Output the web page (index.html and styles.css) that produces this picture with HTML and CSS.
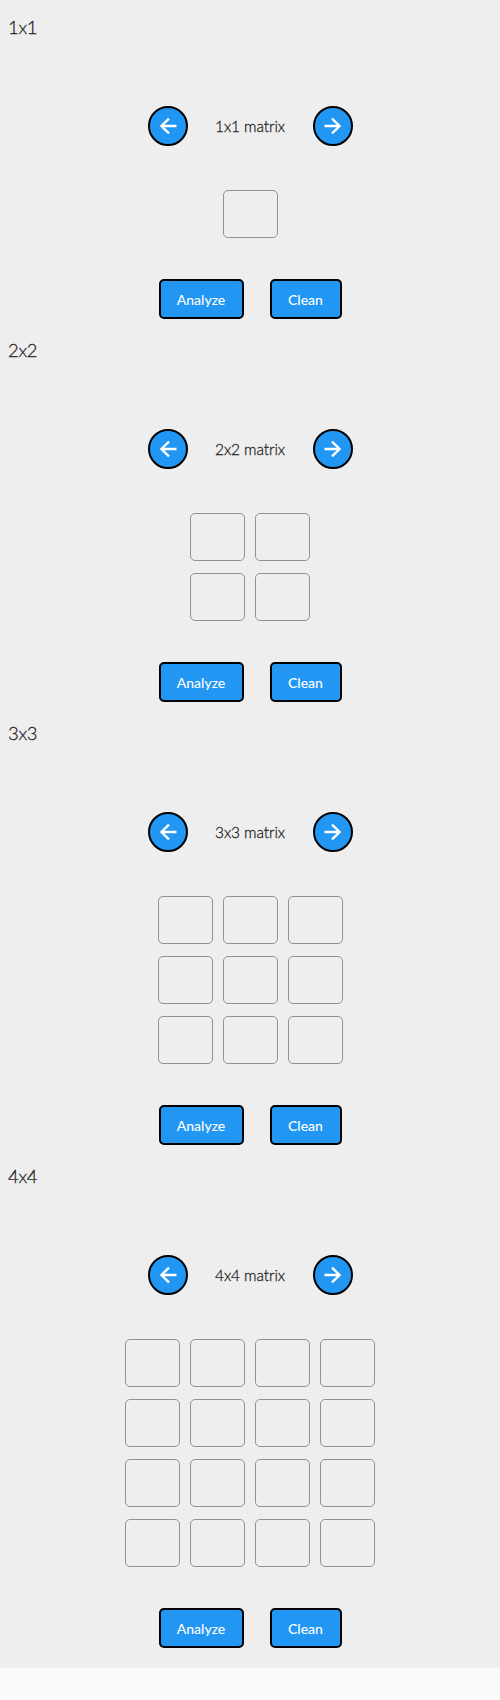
FILE: index.html
```
<!DOCTYPE html>
<html lang="en">
<head>
<meta charset="utf-8">
<title>Matrix</title>
<link rel="stylesheet" href="styles.css">
</head>
<body>
<main class="page" id="page"></main>
<script src="app.js"></script>
</body>
</html>
```
FILE: styles.css
```
* { box-sizing: border-box; }
body { margin: 0; background: #fafafa; font-family: Lato, sans-serif; color: rgba(0, 0, 0, 0.87); }
.page { background: #eee; height: 1668px; }
.title { margin: 0; padding: 15px 8px 0; font-size: 18.5px; line-height: 24px; font-weight: 300; letter-spacing: -0.3px; -webkit-text-stroke: 0.3px #212121; height: 66px; }
.nav { display: flex; align-items: center; justify-content: center; padding-top: 40px; }
.label { width: 125px; text-align: center; font-size: 15.5px; line-height: 24px; font-weight: 300; letter-spacing: -0.1px; -webkit-text-stroke: 0.3px #212121; }
.round { width: 40px; height: 40px; border: 2px solid #000; border-radius: 50%; background: #2196f3; padding: 0; display: flex; align-items: center; justify-content: center; }
.icon { width: 24px; height: 24px; fill: none; stroke: #fff; stroke-width: 2.4; stroke-linejoin: round; }
.grid { display: flex; flex-direction: column; align-items: center; gap: 12px; padding-top: 44px; }
.row { display: flex; gap: 10px; }
.cell { width: 55px; height: 48px; border: 1px solid #929292; border-radius: 5px; }
.actions { display: flex; justify-content: center; gap: 26px; padding: 41px 0 4px; }
.btn { width: 85px; height: 40px; padding: 0; border: 2px solid #000; border-radius: 5px; background: #2196f3; color: #fff; font: 500 14px Lato, sans-serif; }
.btn-clean { width: 72px; }
```
FILE: app.js
```
const icon = d => `<svg class="icon" viewBox="0 0 24 24"><path d="${d}"/></svg>`;
const back = icon("M20.5 12H5M13 4.7L5.3 12l7.7 7.3");
const next = icon("M3.5 12H19M11 4.7l7.7 7.3-7.7 7.3");
document.getElementById("page").innerHTML = [1, 2, 3, 4].map(n => `
<section>
  <h2 class="title">${n}x${n}</h2>
  <div class="nav"><button class="round">${back}</button><span class="label">${n}x${n} matrix</span><button class="round">${next}</button></div>
  <div class="grid">${`<div class="row">${'<div class="cell"></div>'.repeat(n)}</div>`.repeat(n)}</div>
  <div class="actions"><button class="btn">Analyze</button><button class="btn btn-clean">Clean</button></div>
</section>`).join("");
```
